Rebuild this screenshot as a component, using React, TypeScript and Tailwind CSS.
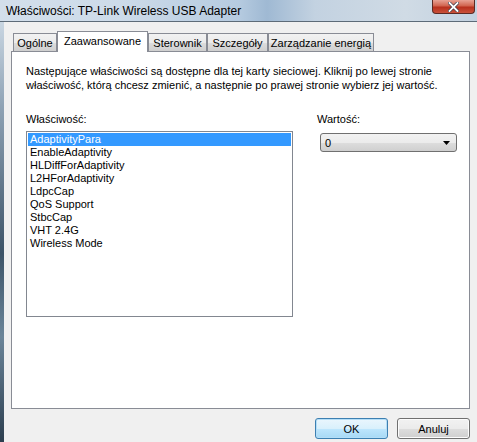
import React from 'react'

const tabs = [
  { label: 'Ogólne', w: 'w-[44px]' },
  { label: 'Zaawansowane', w: 'w-[91px]', active: true },
  { label: 'Sterownik', w: 'w-[59px]' },
  { label: 'Szczegóły', w: 'w-[61px]' },
  { label: 'Zarządzanie energią', w: 'w-[106px]' },
]

const props = [
  'AdaptivityPara',
  'EnableAdaptivity',
  'HLDiffForAdaptivity',
  'L2HForAdaptivity',
  'LdpcCap',
  'QoS Support',
  'StbcCap',
  'VHT 2.4G',
  'Wireless Mode',
]

const App = () => {
  return (
    <div className="w-[477px] h-[442px] overflow-hidden flex flex-col bg-[#f0f0f0] font-['Liberation_Sans',Arial,sans-serif] text-black">
      {/* title bar */}
      <div className="relative h-[22px] shrink-0 flex items-center pl-[6px] border-b border-[#5d6b78] bg-[linear-gradient(90deg,#d3dfeb_0%,#cddbe9_25%,#b6cbe0_50%,#9fb9d3_56%,#c3d2e1_66%,#d0dbe5_85%,#c2d1e0_100%)]">
        <span className="text-[12px] leading-none text-black">Właściwości: TP-Link Wireless USB Adapter</span>
        <div className="absolute right-[2px] top-0 w-[43px] h-[14px] rounded-b-[4px] border border-t-0 border-[#5b2a24] bg-[linear-gradient(180deg,#e8a294_0%,#d1644f_45%,#b8301d_55%,#c9513a_100%)] flex items-center justify-center">
          <svg width="11" height="10" viewBox="0 0 11 10">
            <path d="M1.5 1 L9.5 9 M9.5 1 L1.5 9" stroke="#3b3b4a" strokeWidth="3.2" strokeLinecap="square" />
            <path d="M1.5 1 L9.5 9 M9.5 1 L1.5 9" stroke="#ffffff" strokeWidth="1.8" strokeLinecap="square" />
          </svg>
        </div>
      </div>

      <div className="flex-1 flex">
        {/* glass frame */}
        <div className="w-[4px] bg-[linear-gradient(180deg,#c9d6e2_0%,#8fa3b5_20%,#3d5468_55%,#6b8599_75%,#2c3e4f_100%)]" />

        <div className="flex-1 flex flex-col pl-[7px] pt-[9px] text-[11px] leading-[14px]">
          {/* tabs */}
          <div className="h-[20px] flex items-end pl-[2px] relative z-10">
            {tabs.map((t) =>
              t.active ? (
                <div
                  key={t.label}
                  className={`${t.w} h-[21px] -mb-[1px] bg-white border border-b-0 border-[#898c95] flex items-start justify-center pt-[2px]`}
                >
                  {t.label}
                </div>
              ) : (
                <div
                  key={t.label}
                  className={`${t.w} h-[18px] bg-[linear-gradient(180deg,#f2f2f2_0%,#ebebeb_50%,#dddddd_51%,#cfcfcf_100%)] border border-b-0 border-[#898c95] flex items-center justify-center`}
                >
                  {t.label}
                </div>
              ),
            )}
          </div>

          {/* panel */}
          <div className="w-[459px] h-[358px] bg-white border border-[#898c95] pl-[14px] pt-[12px]">
            <p>Następujące właściwości są dostępne dla tej karty sieciowej. Kliknij po lewej stronie</p>
            <p>właściwość, którą chcesz zmienić, a następnie po prawej stronie wybierz jej wartość.</p>

            <div className="flex mt-[20px]">
              <div className="w-[267px]">
                <div>Właściwość:</div>
                <div className="mt-[5px] h-[186px] border border-[#828790] p-[1px]">
                  {props.map((p, i) => (
                    <div
                      key={p}
                      className={`h-[13px] leading-[13px] pl-[2px] ${i === 0 ? 'bg-[#3399ff] text-white' : ''}`}
                    >
                      {p}
                    </div>
                  ))}
                </div>
              </div>

              <div className="ml-[24px]">
                <div>Wartość:</div>
                <div className="mt-[7px] ml-[3px] w-[137px] h-[19px] rounded-[3px] border border-[#707070] bg-[linear-gradient(180deg,#f2f2f2_0%,#ebebeb_50%,#dddddd_51%,#cfcfcf_100%)] flex items-center justify-between pl-[4px] pr-[6px]">
                  <span>0</span>
                  <svg width="7" height="4" viewBox="0 0 7 4">
                    <path d="M0 0 H7 L3.5 4 Z" fill="#000" />
                  </svg>
                </div>
              </div>
            </div>
          </div>

          {/* buttons */}
          <div className="w-[459px] flex justify-end gap-[9px] mt-[9px]">
            <button className="w-[73px] h-[21px] rounded-[3px] border border-[#3c7fb1] bg-[linear-gradient(180deg,#eaf6fd_0%,#d9f0fc_50%,#bee6fd_51%,#a7d9f5_100%)] shadow-[inset_0_0_0_1px_#b4def7]">
              OK
            </button>
            <button className="w-[73px] h-[21px] rounded-[3px] border border-[#707070] bg-[linear-gradient(180deg,#f2f2f2_0%,#ebebeb_50%,#dddddd_51%,#cfcfcf_100%)] shadow-[inset_0_0_0_1px_#fcfcfc]">
              Anuluj
            </button>
          </div>
        </div>
      </div>
    </div>
  )
}

export default App
